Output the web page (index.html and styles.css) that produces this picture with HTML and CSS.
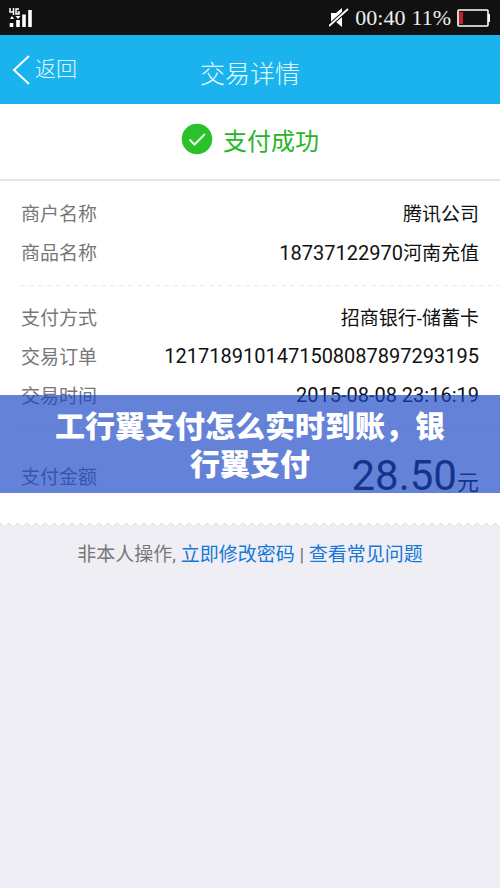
FILE: index.html
```html
<!DOCTYPE html>
<html lang="zh-CN">
<head>
<meta charset="utf-8">
<meta name="viewport" content="width=device-width, initial-scale=1">
<title>交易详情</title>
<link rel="stylesheet" href="styles.css">
</head>
<body>
<div class="status">
  <svg class="signal" width="24" height="20" viewBox="0 0 24 20" fill="none" stroke="#fff" aria-label="4G">
    <path d="M1 0v4h4M4.500 0v7M10 1H7v5h3V4H8.500" stroke-width="1.500"/>
    <path d="M1 11l2-3 2 3zM6.500 8h5L9 11z" fill="#fff" stroke="none"/>
    <path d="M2.500 15v4M9 12v7M15 6.500V19M21 2v17" stroke-width="3.600"/>
  </svg>
  <div class="status-right">
    <svg width="20" height="20" viewBox="0 0 20 20" aria-label="静音">
      <path d="M2 5h5l6-5v19l-6-5H2z" fill="#fff"/>
      <path d="M-1 19L19 1" stroke="#111" stroke-width="4"/>
      <path d="M0 18L19 1" stroke="#fff" stroke-width="1.800"/>
    </svg>
    <span class="clock">00:40</span>
    <span class="percent">11%</span>
    <svg width="34" height="18" viewBox="0 0 34 18" aria-label="电量">
      <rect x="1" y="1" width="30" height="16" rx="1" fill="none" stroke="#fff" stroke-width="1.600"/>
      <rect x="2" y="3" width="4" height="12" fill="#c3202c"/>
      <rect x="31" y="5" width="2" height="8" fill="#fff"/>
    </svg>
  </div>
</div>
<header class="nav">
  <button class="back" type="button">
    <svg width="18" height="30" viewBox="0 0 18 30" fill="none" stroke="#fff" stroke-width="2"><path d="M17 1L2 15l15 14"/></svg>
    <span class="back-label">返回</span>
  </button>
  <h1 class="nav-title">交易详情</h1>
</header>
<main>
  <section class="receipt">
    <div class="result">
      <svg width="32" height="32" viewBox="0 0 32 32" fill="none"><circle cx="16" cy="16" r="15.300" fill="#2ac12b"/><path d="M8.500 16.500l5 5L24 11" stroke="#e6fbe3" stroke-width="2"/></svg>
      <span>支付成功</span>
    </div>
    <dl class="group">
      <div class="row"><dt>商户名称</dt><dd>腾讯公司</dd></div>
      <div class="row"><dt>商品名称</dt><dd><span class="num">18737122970</span>河南充值</dd></div>
    </dl>
    <dl class="group ruled">
      <div class="row"><dt>支付方式</dt><dd>招商银行-储蓄卡</dd></div>
      <div class="row"><dt>交易订单</dt><dd class="num">1217189101471508087897293195</dd></div>
      <div class="row"><dt>交易时间</dt><dd class="num">2015-08-08 23:16:19</dd></div>
    </dl>
    <dl class="group ruled total">
      <div class="row"><dt>支付金额</dt><dd class="sum"><span class="amount">28.50</span>元</dd></div>
    </dl>
    <h2 class="banner">工行翼支付怎么实时到账，银行翼支付</h2>
  </section>
  <svg class="tear" width="100%" height="6" aria-hidden="true">
    <defs><pattern id="teeth" width="9" height="6" patternUnits="userSpaceOnUse">
      <path d="M0 0H9V1L4.500 5 0 1z" fill="#fff"/><path d="M0 1l4.500 4L9 1" fill="none" stroke="#dcdcdf"/>
    </pattern></defs>
    <rect width="100%" height="6" fill="url(#teeth)"/>
  </svg>
  <p class="help">非本人操作, <a href="#password">立即修改密码</a> <span class="bar">|</span> <a href="#faq">查看常见问题</a></p>
</main>
</body>
</html>
```
FILE: styles.css
```css
* {
  box-sizing: border-box;
}

body {
  margin: 0;
  min-height: 100vh;
  background: #efeef4;
  color: #111;
  font-family: Roboto, "Noto Sans CJK SC", sans-serif;
  font-size: 19px;
}

.status {
  display: flex;
  align-items: center;
  justify-content: space-between;
  height: 35px;
  padding: 0 9px;
  background: #111;
  color: #eee;
}

.status-right {
  display: flex;
  align-items: center;
  gap: 6px;
  font-family: "Liberation Serif", serif;
  font-size: 22px;
}

.nav {
  display: grid;
  grid-template-columns: 1fr auto 1fr;
  align-items: center;
  height: 69px;
  padding: 0 12px;
  background: #1ab3ee;
  color: #e2fbff;
}

.back {
  display: flex;
  align-items: center;
  gap: 5px;
  padding: 0;
  border: 0;
  background: none;
  color: inherit;
  font-family: "Noto Sans CJK SC", sans-serif;
  font-size: 21px;
  font-weight: 300;
}

.back-label {
  padding-bottom: 5px;
}

.nav-title {
  margin: 0;
  padding-top: 4px;
  font-family: "Noto Sans CJK SC", sans-serif;
  font-size: 25px;
  font-weight: 300;
}

.receipt {
  position: relative;
  background: #fff;
}

.result {
  display: flex;
  align-items: center;
  justify-content: center;
  gap: 10px;
  height: 77px;
  padding-bottom: 5px;
  border-bottom: 2px solid #e4e4e4;
  color: #25b526;
  font-size: 24px;
}

.group {
  margin: 0;
  padding: 12px 0 14px;
}

.ruled {
  background: repeating-linear-gradient(90deg, #e9e9e9 0 5px, transparent 5px 9px) 20px 0 / 100% 1px no-repeat;
}

.row {
  display: flex;
  align-items: center;
  justify-content: space-between;
  height: 39px;
  padding: 0 21px;
}

dt {
  color: #777;
}

dd {
  margin: 0;
}

.num {
  font-size: 20px;
}

.total {
  padding: 22px 0;
}

.total .row {
  height: 50px;
}

.sum {
  font-size: 22px;
}

.amount {
  font-size: 42px;
}

.banner {
  position: absolute;
  right: 0;
  bottom: 29px;
  left: 0;
  margin: 0;
  padding: 10px 50px 12px;
  background: rgba(26, 68, 198, 0.67);
  color: #fff;
  font-family: "Noto Sans CJK SC", sans-serif;
  font-size: 30px;
  font-weight: 900;
  line-height: 38px;
  text-align: center;
}

.tear {
  display: block;
}

.help {
  margin: 12px 0 0;
  color: #777;
  line-height: 30px;
  text-align: center;
}

.help a {
  color: #1478d8;
  text-decoration: none;
}
```
